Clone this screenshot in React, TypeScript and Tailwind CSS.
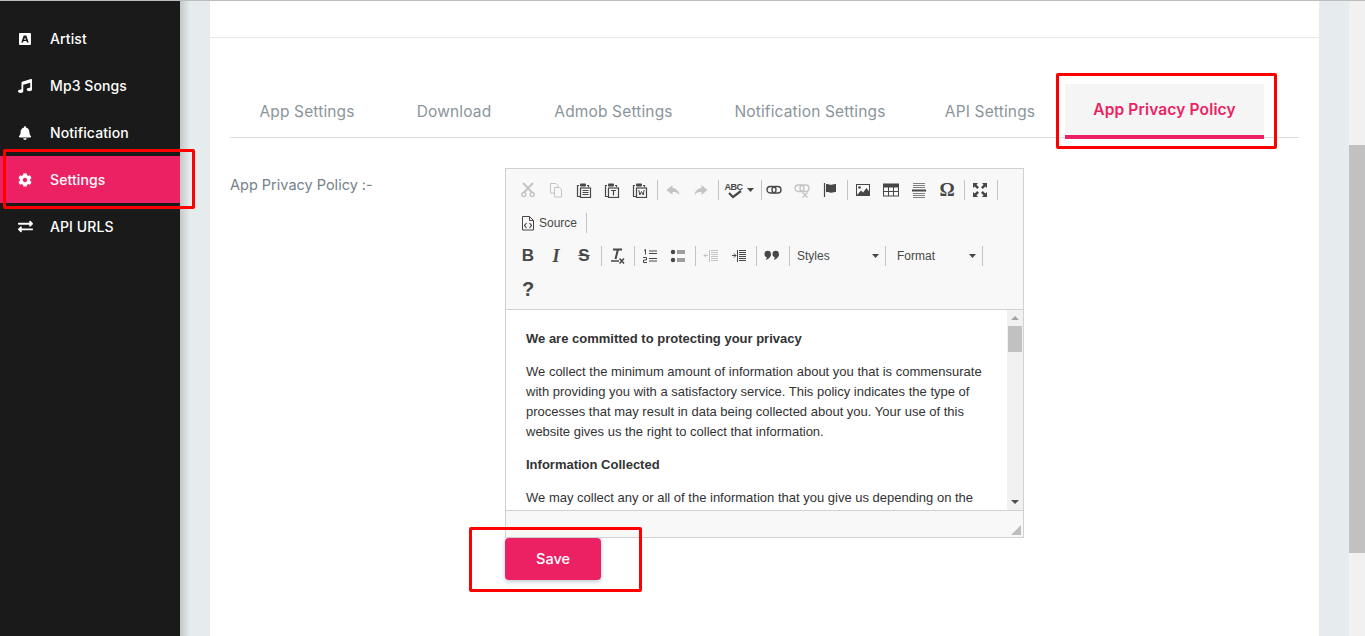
import React from "react";
import { FaMusic, FaBell, FaCog, FaExchangeAlt } from "react-icons/fa";

const P = "#474747";
const D = "#c4c4c4";

const Svg = ({ children, w = 16, h = 16 }: { children: React.ReactNode; w?: number; h?: number }) => (
  <svg width={w} height={h} viewBox={`0 0 ${w} ${h}`} fill="none" className="block">{children}</svg>
);

const Clip = ({ c = P, inner }: { c?: string; inner: React.ReactNode }) => (
  <Svg>
    <path d="M3 3.5H1.5V14.5H4M11 3.5H12.5V5" stroke={c} strokeWidth="1.2" />
    <rect x="4" y="1.5" width="6" height="3" rx="1" fill={c} />
    <rect x="4.5" y="6" width="10" height="9.5" stroke={c} strokeWidth="1.2" />
    {inner}
  </Svg>
);

const Icons: Record<string, React.ReactNode> = {
  cut: (
    <Svg>
      <path d="M3 1l9 9.5M13 1L4 10.5" stroke={D} strokeWidth="2" />
      <circle cx="3.8" cy="12.5" r="2" stroke={D} strokeWidth="1.5" />
      <circle cx="12.2" cy="12.5" r="2" stroke={D} strokeWidth="1.5" />
    </Svg>
  ),
  copy: (
    <Svg>
      <path d="M2.5 1.5H8L10 3.5V11H2.5Z" stroke={D} />
      <path d="M6.5 5.5H11.5L13.5 7.5V15H6.5Z" fill="#f8f8f8" stroke={D} />
    </Svg>
  ),
  paste: <Clip inner={<path d="M6.5 8.5h6M6.5 10.5h6M6.5 12.5h6" stroke={P} />} />,
  pasteT: <Clip inner={<path d="M7 8.5h5M9.5 8.5v5" stroke={P} strokeWidth="1.2" />} />,
  pasteW: <Clip inner={<path d="M6.8 8l1 5 1.7-3.5 1.7 3.5 1-5" stroke={P} />} />,
  undo: (
    <Svg>
      <path d="M7.5 3L1.5 8l6 5V10c3 0 5 .5 7 3-.5-4-3-6.5-7-7Z" fill={D} />
    </Svg>
  ),
  redo: (
    <Svg>
      <path d="M8.5 3l6 5-6 5V10c-3 0-5 .5-7 3 .5-4 3-6.5 7-7Z" fill={D} />
    </Svg>
  ),
  link: (
    <Svg>
      <rect x="1" y="4.5" width="9" height="6.5" rx="3.2" stroke={P} strokeWidth="1.4" />
      <rect x="6" y="4.5" width="9" height="6.5" rx="3.2" stroke={P} strokeWidth="1.4" />
    </Svg>
  ),
  unlink: (
    <Svg>
      <rect x="1" y="3" width="9" height="6.5" rx="3.2" stroke={D} strokeWidth="1.4" />
      <rect x="6" y="3" width="9" height="6.5" rx="3.2" stroke={D} strokeWidth="1.4" />
      <path d="M8.5 10.5l5 5M13.5 10.5l-5 5" stroke={D} strokeWidth="1.4" />
    </Svg>
  ),
  flag: (
    <Svg>
      <path d="M2.5 1v14" stroke={P} strokeWidth="1.2" />
      <path d="M4 2.2c2-.8 3 .8 5.5.5 1.500-.2 3-.7 4.500-.7v8c-1.500 0-3 .7-4.500.8-2.500.2-3.500-1.200-5.500-.5Z" fill={P} />
    </Svg>
  ),
  image: (
    <Svg>
      <rect x="1.500" y="2.500" width="13" height="11" stroke={P} />
      <circle cx="4.500" cy="5.500" r="1.300" fill={P} />
      <path d="M2 13l4-4.500 2 2 3.500-4.500 3 4v3Z" fill={P} />
    </Svg>
  ),
  table: (
    <Svg>
      <rect x="0.500" y="2" width="15" height="12" stroke={P} />
      <rect x="0.500" y="2" width="15" height="3.500" fill={P} />
      <path d="M5.500 5v9M10.500 5v9M1 9.500h14" stroke={P} />
    </Svg>
  ),
  hr: (
    <Svg>
      <path d="M2 1.500h12M2 3.500h12M2 5.500h12M2 11.500h12M2 13.500h12M2 15.500h12" stroke="#808080" />
      <path d="M1 8.500h14" stroke={P} strokeWidth="2" />
    </Svg>
  ),
  max: (
    <Svg>
      <path d="M1 1h5L4.500 2.700 7 5.200 5.200 7 2.700 4.500 1 6ZM15 1v5L13.300 4.500 10.800 7 9 5.200 11.500 2.700 10 1ZM1 15v-5l1.700 1.500L5.200 9 7 10.800 4.500 13.300 6 15ZM15 15h-5l1.500-1.700L9 10.800 10.800 9l2.500 2.500L15 10Z" fill={P} />
    </Svg>
  ),
  source: (
    <Svg>
      <path d="M2.500 1.500H9.500L13.500 5.500V15H2.500Z" stroke={P} />
      <path d="M9.500 1.500V5.500H13.500" stroke={P} />
      <path d="M6.500 8L4.500 10.500 6.500 13M9.500 8l2 2.500-2 2.500" stroke={P} strokeWidth="1.200" />
    </Svg>
  ),
  clear: (
    <Svg>
      <path d="M4 1.500h9M8.800 2L6.500 11" stroke={P} strokeWidth="2" />
      <path d="M2 13h8" stroke={P} strokeWidth="1.500" />
      <path d="M10.500 10.500l4.500 5M15 10.500l-4.500 5" stroke={P} strokeWidth="1.500" />
    </Svg>
  ),
  ol: (
    <Svg>
      <path d="M7 3h8M7 5.500h8M7 10.500h8M7 13h8" stroke={P} strokeWidth="1.100" />
      <path d="M2 2.500l1.500-1v5M1 9.500h3.500v2.500H1.500v2.500H5" stroke={P} strokeWidth="1" />
    </Svg>
  ),
  ul: (
    <Svg>
      <circle cx="3" cy="4" r="2.200" fill={P} />
      <circle cx="3" cy="12" r="2.200" fill={P} />
      <path d="M7 3h8M7 5h8M7 11h8M7 13h8" stroke={P} strokeWidth="1.100" />
    </Svg>
  ),
  outdent: (
    <Svg>
      <path d="M8 2.500h7M8 4.500h7M8 6.500h7M8 8.500h7M8 10.500h7M8 12.500h7" stroke={D} />
      <path d="M6.500 2v12" stroke={D} />
      <path d="M1 7.500h4M1 7.500l2-2M1 7.500l2 2" stroke={D} />
    </Svg>
  ),
  indent: (
    <Svg>
      <path d="M8 2.500h7M8 4.500h7M8 6.500h7M8 8.500h7M8 10.500h7M8 12.500h7" stroke={P} />
      <path d="M6.500 2v12" stroke={P} />
      <path d="M1 7.500h4M5 7.500l-2-2M5 7.500l-2 2" stroke={P} />
    </Svg>
  ),
  quote: (
    <Svg>
      <circle cx="3.700" cy="6" r="3.200" fill={P} />
      <path d="M6.900 6c0 3-2 5-5 6l1-3Z" fill={P} />
      <circle cx="11.700" cy="6" r="3.200" fill={P} />
      <path d="M14.900 6c0 3-2 5-5 6l1-3Z" fill={P} />
    </Svg>
  ),
};

const Btn = ({ i, children }: { i?: string; children?: React.ReactNode }) => (
  <div className="w-7 h-[33px] flex items-center justify-center shrink-0">{i ? Icons[i] : children}</div>
);
const Sep = () => <div className="w-px h-5 bg-[#c4c4c4] ml-[3px] mr-px shrink-0" />;
const Glyph = ({ className, children }: { className: string; children: React.ReactNode }) => (
  <span className={"text-[#474747] leading-none " + className}>{children}</span>
);

const Caret = () => (
  <svg width="7" height="4" viewBox="0 0 7 4" className="block"><path d="M0 0h7L3.500 4Z" fill="#474747" /></svg>
);

const Combo = ({ label, w }: { label: string; w: string }) => (
  <div className={"h-[33px] flex items-center justify-between shrink-0 pl-[6px] pr-[6px] text-[12px] text-[#484848] " + w}>
    <span>{label}</span>
    <Caret />
  </div>
);

const NavItem = ({ icon, label, active }: { icon: React.ReactNode; label: string; active?: boolean }) => (
  <div className={"h-[47px] flex items-center text-[14px] font-medium tracking-[0.1px] text-white " + (active ? "bg-[#ec2163]" : "")}>
    <div className="w-[50px] pl-[18px] flex items-center shrink-0">{icon}</div>
    <span>{label}</span>
  </div>
);

const Tab = ({ label, w, active }: { label: string; w: string; active?: boolean }) => (
  <div
    className={
      "h-[55px] shrink-0 flex items-center justify-center pt-[-1px] text-[15.5px] tracking-[0.15px] " +
      w +
      (active
        ? " bg-[#f5f5f5] border-b-4 border-[#ec2163] text-[#ec2163] font-semibold"
        : " text-[#8a959b]")
    }
  >
    {label}
  </div>
);

const Annot = ({ className }: { className: string }) => (
  <div className={"absolute border-[3px] border-[#ff0000] rounded-[2px] pointer-events-none " + className} />
);

export default function App() {
  return (
    <div className="relative w-[1365px] h-[636px] overflow-hidden flex border-t border-[#bdbdbd] font-['Inter','Liberation_Sans',sans-serif]">
      <aside className="w-[180px] shrink-0 bg-[#1a1a1a] pt-[14px] z-10">
        <NavItem
          label="Artist"
          icon={
            <svg width="14" height="14" viewBox="0 0 14 14" className="block">
              <path fillRule="evenodd" d="M2 1h10a1 1 0 0 1 1 1v10a1 1 0 0 1-1 1H2a1 1 0 0 1-1-1V2a1 1 0 0 1 1-1ZM5.700 3.500 3.300 10.500h1.800l.4-1.400h3l.4 1.400h1.800L8.300 3.500ZM7 5.500l1 2.200H6Z" fill="#fff" />
            </svg>
          }
        />
        <NavItem label="Mp3 Songs" icon={<FaMusic size={14} color="#fff" />} />
        <NavItem label="Notification" icon={<FaBell size={14} color="#fff" />} />
        <NavItem label="Settings" active icon={<FaCog size={14} color="#fff" />} />
        <NavItem label="API URLS" icon={<FaExchangeAlt size={15} color="#fff" />} />
      </aside>

      <main className="flex-1 flex bg-[#e6ebee] bg-[linear-gradient(90deg,#c4c8ca_0px,#e6ebee_10px)] px-[30px]">
        <div className="flex-1 bg-white">
          <div className="h-[37px] border-b border-[#e8e8e8]" />
          <div className="px-5">
            <div className="mt-[46px] h-[54px] border-b border-[#dddddd] flex gap-[2px]">
              <Tab label="App Settings" w="w-[154px]" />
              <Tab label="Download" w="w-[136px]" />
              <Tab label="Admob Settings" w="w-[179px]" />
              <Tab label="Notification Settings" w="w-[210px]" />
              <Tab label="API Settings" w="w-[146px]" />
              <Tab label="App Privacy Policy" w="w-[199px]" active />
            </div>
            <div className="mt-[30px] flex">
              <label className="w-[275px] shrink-0 pt-[7px] text-[14.500px] leading-5 text-[#75828a]">App Privacy Policy :-</label>
              <div>
                <div className="w-[519px] h-[370px] border border-[#d1d1d1] flex flex-col font-['Liberation_Sans',sans-serif]">
                  <div className="h-[141px] shrink-0 bg-[#f8f8f8] border-b border-[#d1d1d1] pl-2 pt-[4px]">
                    <div className="flex items-center h-[33px]">
                      <Btn i="cut" /><Btn i="copy" /><Btn i="paste" /><Btn i="pasteT" /><Btn i="pasteW" /><Sep />
                      <Btn i="undo" /><Btn i="redo" /><Sep />
                      <div className="w-[38px] h-[33px] flex items-center justify-center gap-[2px] shrink-0">
                        <div className="relative w-[20px] h-[16px]">
                          <span className="absolute left-0 top-[-1px] text-[9px] font-bold tracking-[-0.5px] text-[#474747]">ABC</span>
                          <svg width="18" height="9" viewBox="0 0 18 9" className="absolute left-[2px] top-[8px]"><path d="M2 3l4 4 8-6" stroke="#474747" strokeWidth="2.200" fill="none" /></svg>
                        </div>
                        <Caret />
                      </div>
                      <Sep />
                      <div className="-ml-[3px] flex items-center"><Btn i="link" /><Btn i="unlink" /><Btn i="flag" /></div><Sep />
                      <Btn i="image" /><Btn i="table" /><Btn i="hr" />
                      <Btn><Glyph className="font-['Liberation_Serif',serif] text-[19px] font-bold">Ω</Glyph></Btn><Sep />
                      <Btn i="max" /><Sep />
                    </div>
                    <div className="flex items-center h-[33px]">
                      <div className="w-7 flex justify-center shrink-0">{Icons.source}</div>
                      <span className="text-[12px] text-[#484848] ml-[-3px] w-[47px]">Source</span>
                      <div className="w-px h-5 bg-[#c4c4c4]" />
                    </div>
                    <div className="flex items-center h-[33px]">
                      <Btn><Glyph className="text-[17px] font-bold">B</Glyph></Btn>
                      <Btn><Glyph className="font-['Liberation_Serif',serif] text-[18px] font-bold italic">I</Glyph></Btn>
                      <Btn><Glyph className="text-[17px] font-bold line-through">S</Glyph></Btn><Sep />
                      <Btn i="clear" /><Sep />
                      <Btn i="ol" /><Btn i="ul" /><Sep />
                      <Btn i="outdent" /><Btn i="indent" /><Sep />
                      <Btn i="quote" /><Sep />
                      <Combo label="Styles" w="w-[94px]" /><div className="w-px h-5 bg-[#c4c4c4] shrink-0" />
                      <div className="w-[5px] shrink-0" />
                      <Combo label="Format" w="w-[91px]" /><div className="w-px h-5 bg-[#c4c4c4] shrink-0" />
                    </div>
                    <div className="flex items-center h-[33px]">
                      <Btn><Glyph className="text-[20px] font-bold">?</Glyph></Btn>
                    </div>
                  </div>
                  <div className="h-[201px] shrink-0 flex border-b border-[#d1d1d1]">
                    <div className="flex-1 overflow-hidden pl-5 pr-5 pt-[19px] text-[13px] leading-5 text-[#333333]">
                      <p className="font-bold mb-[13px]">We are committed to protecting your privacy</p>
                      <p className="mb-[13px]">We collect the minimum amount of information about you that is commensurate with providing you with a satisfactory service. This policy indicates the type of processes that may result in data being collected about you. Your use of this website gives us the right to collect that information.</p>
                      <p className="font-bold mb-[13px]">Information Collected</p>
                      <p>We may collect any or all of the information that you give us depending on the type of transaction you enter into, including your name, address.</p>
                    </div>
                    <div className="w-[16px] shrink-0 bg-[#f1f1f1] flex flex-col">
                      <div className="h-[16px] flex items-center justify-center">
                        <svg width="8" height="4" viewBox="0 0 8 4"><path d="M0 4h8L4 0Z" fill="#a3a3a3" /></svg>
                      </div>
                      <div className="mx-px h-[26px] bg-[#c1c1c1]" />
                      <div className="flex-1" />
                      <div className="h-[16px] flex items-center justify-center">
                        <svg width="8" height="4" viewBox="0 0 8 4"><path d="M0 0h8L4 4Z" fill="#505050" /></svg>
                      </div>
                    </div>
                  </div>
                  <div className="flex-1 bg-[#f8f8f8] flex items-end justify-end p-[2px]">
                    <svg width="10" height="10" viewBox="0 0 10 10" className="block"><path d="M10 0v10H0Z" fill="#bdbdbd" /></svg>
                  </div>
                </div>
                <button className="w-[96px] h-[42px] rounded-[4px] bg-[#ec2163] text-white text-[14.500px] font-medium shadow-[0_2px_4px_rgba(80,110,140,0.35)]">Save</button>
              </div>
            </div>
          </div>
        </div>
      </main>

      <div className="w-[16px] shrink-0 bg-[#f1f1f1] flex flex-col pt-[144px]">
        <div className="h-[408px] bg-[#c1c1c1]" />
      </div>

      <Annot className="left-[3px] top-[148px] w-[192px] h-[60px] z-20" />
      <Annot className="left-[1056px] top-[72px] w-[221px] h-[76px]" />
      <Annot className="left-[469px] top-[526px] w-[173px] h-[65px]" />
    </div>
  );
}
